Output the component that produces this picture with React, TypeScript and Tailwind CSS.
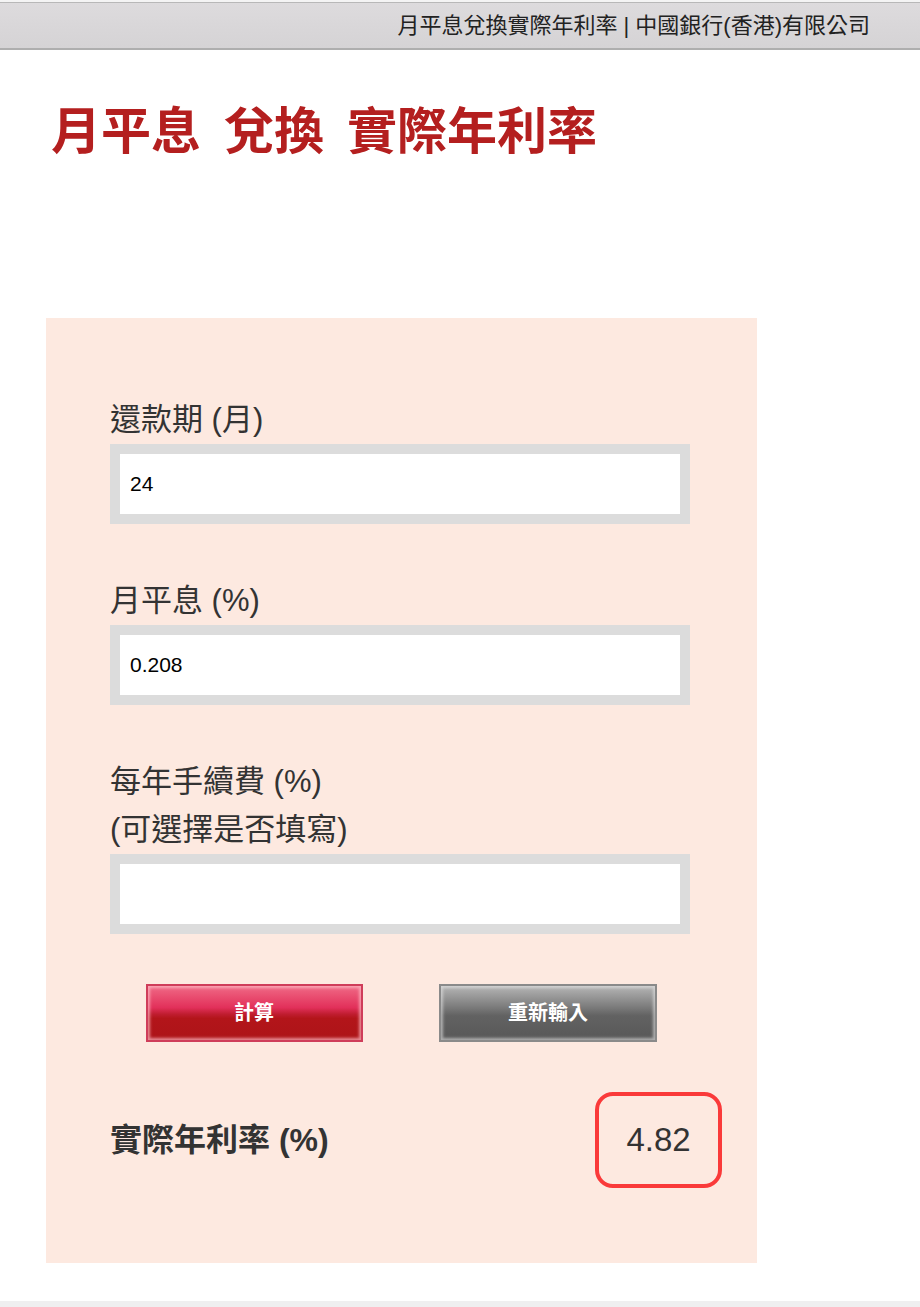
import React from "react";

const FONT = '"Liberation Sans", "Noto Sans CJK TC", sans-serif';

function Field({ label, value }: { label: React.ReactNode; value: string }) {
  return (
    <div className="flex flex-col">
      <div className="text-[31px] leading-[48px] text-[#333333]">{label}</div>
      <div className="h-[80px] w-[580px] border-[10px] border-[#dcdcdc] bg-white flex items-center px-[10px]">
        <span className="text-[21px] text-black">{value}</span>
      </div>
    </div>
  );
}

export default function App() {
  return (
    <div className="w-[920px] min-h-[1307px] bg-white flex flex-col" style={{ fontFamily: FONT }}>
      <div className="h-[2px] bg-[#f4f4f4]" />
      <div className="h-[48px] border-t-[1px] border-b-[2px] border-t-[#b8b8b8] border-b-[#aeaeae] bg-gradient-to-b from-[#dddbdd] to-[#d5d3d5] flex items-center justify-end pr-[50px]">
        <span className="text-[22px] text-[#222222]">月平息兌換實際年利率 | 中國銀行(香港)有限公司</span>
      </div>
      <h1 className="mt-[52px] ml-[51px] text-[50px] leading-[60px] font-bold text-[#b41f1f] flex">
        <span>月平息</span>
        <span className="inline-block w-[23px]" />
        <span>兌換</span>
        <span className="inline-block w-[23px]" />
        <span>實際年利率</span>
      </h1>
      <div className="mt-[156px] ml-[46px] w-[711px] bg-[#fde9e0] pt-[78px] pb-[75px] flex flex-col">
        <div className="pl-[64px] flex flex-col gap-[53px]">
          <Field label="還款期 (月)" value="24" />
          <Field label="月平息 (%)" value="0.208" />
          <Field
            label={
              <>
                每年手續費 (%)
                <br />
                (可選擇是否填寫)
              </>
            }
            value=""
          />
        </div>
        <div className="pl-[64px] mt-[50px]">
          <div className="w-[580px] grid grid-cols-2">
            <div className="flex justify-center">
              <button className="w-[217px] h-[58px] ml-[-2px] border-[2px] border-[#cf3d5a] bg-[linear-gradient(to_bottom,#f06a86_0%,#e2305a_40%,#c01d30_52%,#b3151a_60%,#ad1418_100%)] shadow-[inset_0_0_3px_2px_rgba(255,190,200,0.7)] text-white text-[20px] font-bold">
                計算
              </button>
            </div>
            <div className="flex justify-center">
              <button className="w-[218px] h-[58px] ml-[6px] border-[2px] border-[#8a8a8a] bg-[linear-gradient(to_bottom,#b5b5b5_0%,#7a7a7a_40%,#626262_55%,#585858_100%)] shadow-[inset_0_0_3px_2px_rgba(230,230,230,0.6)] text-white text-[20px] font-bold">
                重新輸入
              </button>
            </div>
          </div>
        </div>
        <div className="mt-[50px] pl-[64px] pr-[35px] flex items-center justify-between">
          <span className="text-[32px] font-bold text-[#333333]">實際年利率 (%)</span>
          <div className="w-[127px] h-[96px] border-[4px] border-[#fa3a3a] rounded-[18px] flex items-center justify-center">
            <span className="text-[33px] text-[#333333]">4.82</span>
          </div>
        </div>
      </div>
      <div className="flex-1" />
      <div className="h-[6px] bg-[#efeff0]" />
    </div>
  );
}
